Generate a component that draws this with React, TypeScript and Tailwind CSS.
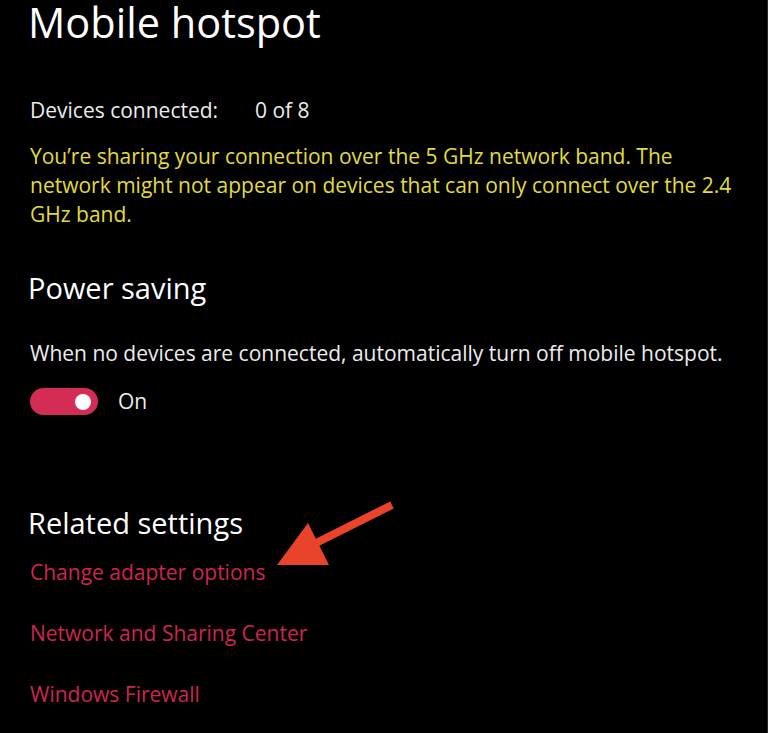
const links = ["Change adapter options", "Network and Sharing Center", "Windows Firewall"];

const App = () => {
  return (
    <div className="relative min-h-[733px] w-full overflow-hidden bg-black border-r border-[#2a2a2a] pl-[30px] pt-[2px] font-['Open_Sans','Noto_Sans',sans-serif] text-white">
      <h1 className="-ml-[2px] text-[41.5px] leading-[40px] font-normal">Mobile hotspot</h1>

      <div className="mt-[54px] flex text-[21px] leading-[29px] text-[#ececec]">
        <span className="w-[225px]">Devices connected:</span>
        <span>0 of 8</span>
      </div>

      <p className="mt-[17px] w-[710px] text-[21px] leading-[29px] text-[#e2dc3c]">
        You’re sharing your connection over the 5 GHz network band. The network might not appear on devices that can only connect over the 2.4 GHz band.
      </p>

      <h2 className="mt-[41px] -ml-[2px] text-[29px] leading-[36px]">Power saving</h2>

      <p className="mt-[33px] text-[21px] leading-[29px] text-[#ececec]">
        When no devices are connected, automatically turn off mobile hotspot.
      </p>

      <div className="mt-[19px] flex items-center gap-5">
        <div className="flex h-[27px] w-[68px] items-center justify-end rounded-full bg-[#d42d55] pr-[7px]">
          <div className="h-4 w-4 rounded-full bg-white" />
        </div>
        <span className="text-[21px] leading-[29px] text-[#ececec]">On</span>
      </div>

      <h2 className="mt-[89px] -ml-[2px] text-[29px] leading-[36px]">Related settings</h2>

      <div className="mt-[17px] flex flex-col gap-[32px]">
        {links.map((l) => (
          <a key={l} className="text-[21px] leading-[29px] text-[#cf2550]">
            {l}
          </a>
        ))}
      </div>

      {/* annotation arrow */}
      <svg className="absolute left-[270px] top-[498px]" width="130" height="72" viewBox="270 498 130 72">
        <line x1="392" y1="505" x2="312" y2="545" stroke="#e9432b" strokeWidth="8" />
        <polygon points="277,565 308,523 329,565" fill="#e9432b" />
      </svg>
    </div>
  );
};

export default App;
